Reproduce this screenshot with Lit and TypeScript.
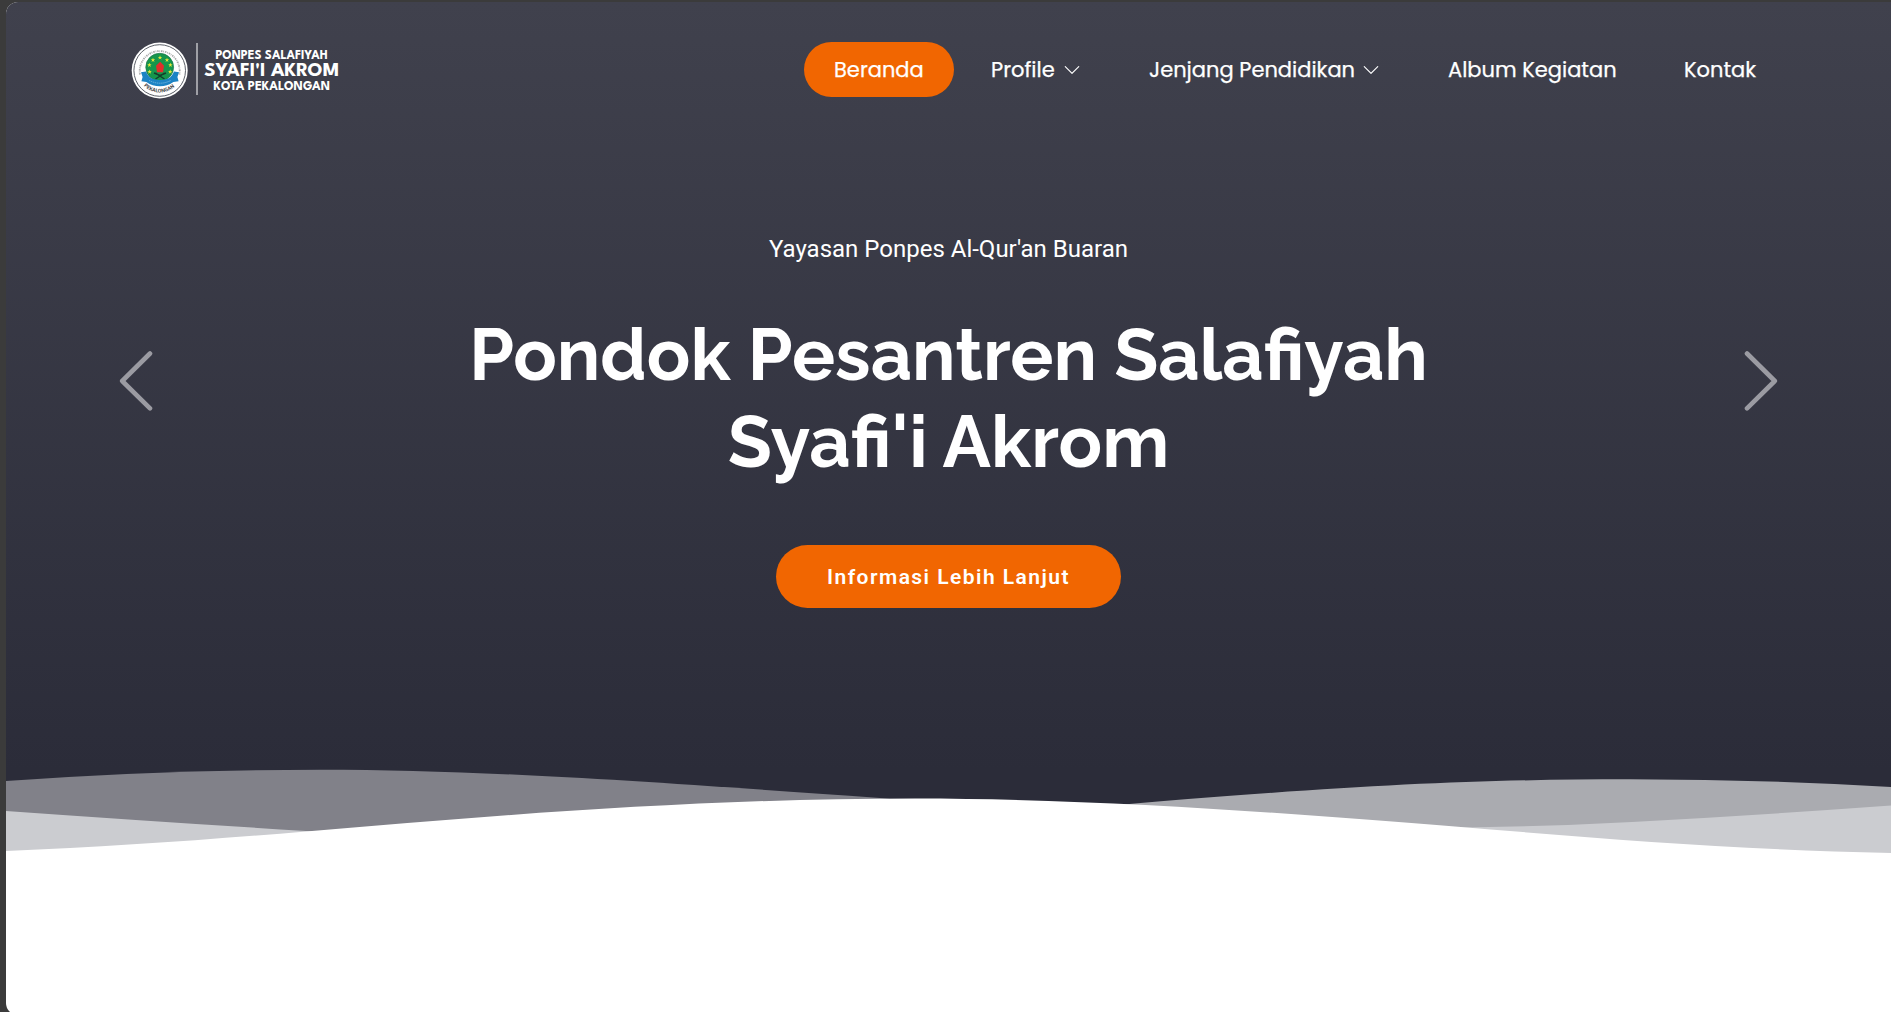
import { LitElement, html, svg, css } from "lit";
import { customElement } from "lit/decorators.js";

const STARS = [
  [149.6, 71.8], [149.4, 65], [153, 60], [160, 57.6], [167, 60], [170.4, 65], [170.2, 71.8],
];

@customElement("site-logo")
export class SiteLogo extends LitElement {
  static styles = css`
    :host { display: block; width: 212px; height: 60px; }
    .logo { display: block; }
    .brand { font-family: "League Spartan", Raleway, Lato, sans-serif; font-weight: 750; fill: #fff; }
    .ring { font-family: Roboto, sans-serif; font-weight: 700; fill: #444; }
  `;
  render() {
    return html`<svg class="logo" width="212" height="60" viewBox="131 40 212 60" role="img" aria-label="Syafi'i Akrom">
      <defs>
        <path id="arc-bottom" d="M143.2 85 A22 22 0 0 0 176.2 85" />
      </defs>
      <circle cx="159.7" cy="70.5" r="28" fill="#fff" />
      <circle cx="159.7" cy="70.5" r="25.8" fill="none" stroke="#4b4f58" stroke-width=".9" />
      <path d="M140 74.5A20 20 0 1 1 179.4 74.5" fill="none" stroke="#a8a8a8" stroke-width="1.8" stroke-dasharray="1.5 .8 .8 .9" />
      <circle cx="159.7" cy="67.2" r="13.9" fill="#16964c" stroke="#20764a" stroke-width=".7" />
      ${STARS.map(([x, y]) => svg`<path fill="#e4e43a" transform="translate(${x} ${y})" d="M0-2.3.6-.7 2.2-.7.9.3 1.5 2 0 1-1.5 2-.9.3-2.2-.7-.6-.7Z" />`)}
      <path fill="#e32d2b" d="M160.2 61.8 164 65.8 163 72.2H157L156 65.8Z" />
      <path fill="none" stroke="#123f2b" stroke-width="1.4" d="M154 73 160 75.4 166 73M155.5 79 164.5 73.2M164.5 79 155.5 73.2" />
      <path fill="#1c83c4" d="M141 72.2 146 71.4Q148.2 77.6 154 79.2 160 80.6 166 79.2 171.8 77.6 174 71.4L179 72.2 177.4 77 178.6 81.3 173.4 81.9Q167 86.2 160 86.2 152.5 86.2 146.4 81.9L141.4 81.3 142.6 77Z" />
      <path fill="none" stroke="#8ec4e6" stroke-width=".7" stroke-dasharray="1.4 .7" d="M149 80.4Q160 86 171 80.4" />
      <text class="ring" font-size="5.2"><textPath href="#arc-bottom" startOffset="1">PEKALONGAN</textPath></text>
      <rect x="196.3" y="43" width="1.4" height="52" fill="#c9c9cd" />
      <text class="brand" x="215.4" y="58.7" font-size="12.8" textLength="112.3" lengthAdjust="spacingAndGlyphs">PONPES SALAFIYAH</text>
      <text class="brand" x="204.3" y="76" font-size="19.4" textLength="135" lengthAdjust="spacingAndGlyphs">SYAFI'I AKROM</text>
      <text class="brand" x="213.5" y="90" font-size="12.8" textLength="116.5" lengthAdjust="spacingAndGlyphs">KOTA PEKALONGAN</text>
    </svg>`;
  }
}

const NAV = [
  { label: "Beranda", cls: "link active beranda", menu: false },
  { label: "Profile", cls: "link profile", menu: true },
  { label: "Jenjang Pendidikan", cls: "link jenjang", menu: true },
  { label: "Album Kegiatan", cls: "link album", menu: false },
  { label: "Kontak", cls: "link kontak", menu: false },
];

const CHEVRON_DOWN = "M1.646 4.646a.5.5 0 0 1 .708 0L8 10.293l5.646-5.647a.5.5 0 0 1 .708.708l-6 6a.5.5 0 0 1-.708 0l-6-6a.5.5 0 0 1 0-.708z";

@customElement("app-root")
export class AppRoot extends LitElement {
  static styles = css`
    :host { display: block; height: 1012px; background: #3b3b3b; overflow: hidden; }
    * { box-sizing: border-box; }
    .frame { height: 1012px; padding: 2px 0 0 6px; overflow: hidden; }
    .page { height: 1013px; background: #fff; border-radius: 12px 0 0 12px; overflow: hidden; }
    .hero { height: 852px; background: linear-gradient(#40414d 0, #2b2c39 768px); display: flex; flex-direction: column; }
    .header { height: 135px; flex: none; padding: 0 105px 0 125px; display: flex; align-items: center; justify-content: space-between; }
    .nav { display: flex; align-items: center; gap: 8px; font: 400 21px/55px Poppins, Inter, "Liberation Sans", sans-serif; color: #fff; -webkit-text-stroke: .25px #fff; }
    .link { height: 55px; padding: 0 30px; border-radius: 28px; display: flex; align-items: center; white-space: nowrap; color: #fff; text-decoration: none; }
    .active { background: #f16601; }
    .beranda { width: 150px; }
    .profile { width: 149px; padding-left: 29px; }
    .jenjang { width: 291px; }
    .album { width: 228px; }
    .kontak { width: 132px; }
    .label { flex: none; }
    .caret { margin-left: auto; flex: none; }
    .carousel { height: 488px; flex: none; padding: 0 113px; display: flex; align-items: center; justify-content: space-between; }
    .arrow { flex: none; display: block; }
    .slide { height: 488px; display: flex; flex-direction: column; align-items: center; color: #fff; text-align: center; }
    .kicker { margin: 96px 0 0; font: 400 24px/32px Roboto, sans-serif; white-space: nowrap; }
    .title { margin: 46px 0 0; font: 700 72px/87px Raleway, Lato, sans-serif; white-space: nowrap; }
    .line { display: block; }
    .cta { margin-top: 60px; width: 345px; height: 63px; flex: none; border-radius: 32px; background: #f16601; color: #fff; font: 600 21px/64px Roboto, sans-serif; letter-spacing: 1.45px; text-decoration: none; white-space: nowrap; }
    .waves { display: block; flex: none; margin-top: 127px; }
  `;

  render() {
    return html`<div class="frame"><main class="page">
      <section class="hero">
        <header class="header">
          <site-logo></site-logo>
          <nav class="nav">
            ${NAV.map((n) => html`<a class=${n.cls}><span class="label">${n.label}</span>${n.menu
              ? html`<svg class="caret" width="18" height="18" viewBox="0 0 16 16" fill="#fff"><path d=${CHEVRON_DOWN} /></svg>`
              : ""}</a>`)}
          </nav>
        </header>
        <div class="carousel">
          <svg class="arrow" width="34" height="62" viewBox="0 0 34 62"><path d="M31 3.5 3.2 31 31 58.3" fill="none" stroke="#9b9ba2" stroke-width="4.6" stroke-linecap="round" stroke-linejoin="round" /></svg>
          <div class="slide">
            <p class="kicker">Yayasan Ponpes Al-Qur'an Buaran</p>
            <h1 class="title"><span class="line first">Pondok Pesantren Salafiyah</span><span class="line second">Syafi'i Akrom</span></h1>
            <a class="cta">Informasi Lebih Lanjut</a>
          </div>
          <svg class="arrow" width="34" height="62" viewBox="0 0 34 62"><path d="M3 3.5 30.8 31 3 58.3" fill="none" stroke="#9b9ba2" stroke-width="4.6" stroke-linecap="round" stroke-linejoin="round" /></svg>
        </div>
        <svg class="waves" width="1885" height="104" viewBox="6 752 1885 104">
          <path fill="#818189" d="M6 781Q160 769.7 320 769.7C480 769.7 640 781 880 798L1000 810V856H6Z" />
          <path fill="#aaabb0" d="M1050 812Q1130 803 1251 794.3C1400 783.5 1500 779.3 1630 779.3Q1760 779.3 1891 787V856H1050Z" />
          <path fill="#cbccd0" d="M6 811Q160 822 306 831L420 836V856H6Z" />
          <path fill="#cbccd0" d="M1400 828Q1520 828 1632 822Q1760 815 1891 805.5V856H1400Z" />
          <path fill="#fff" d="M6 851C110 847 210 839.5 306 831.5C500 815 700 798.5 915 798.5C1100 798.5 1300 814 1455 826.5C1600 838.5 1740 850 1891 853V857H6Z" />
        </svg>
      </section>
    </main></div>`;
  }
}
